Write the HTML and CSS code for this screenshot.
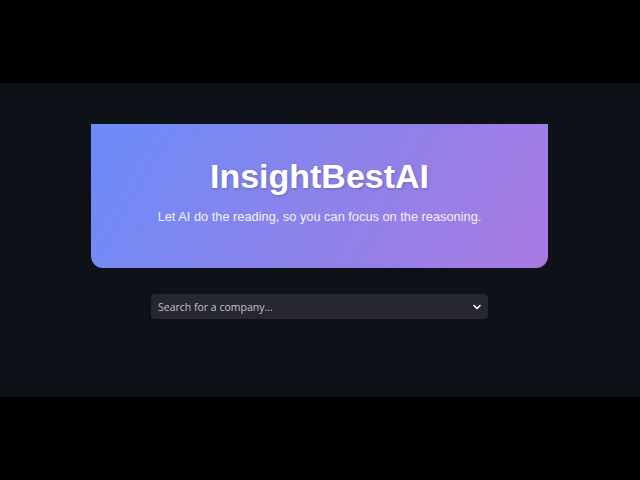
FILE: index.html
```html
<!DOCTYPE html>
<html>
<head>
<meta charset="utf-8">
<link rel="stylesheet" href="styles.css">
</head>
<body>
<div class="screen">
  <main class="app">
    <section class="hero">
      <h1 class="hero-title">InsightBestAI</h1>
      <p class="hero-sub">Let AI do the reading, so you can focus on the reasoning.</p>
    </section>
    <div class="select">
      <span class="select-placeholder">Search for a company...</span>
      <svg class="chevron" width="10" height="10" viewBox="0 0 10 10"><path d="M2 3.5 L5 6.5 L8 3.5" fill="none" stroke="#fafafa" stroke-width="1.6" stroke-linecap="round" stroke-linejoin="round"/></svg>
    </div>
  </main>
</div>
</body>
</html>
```
FILE: styles.css
```css
html, body {
  margin: 0;
  padding: 0;
  background: #000;
  width: 640px;
  height: 480px;
  overflow: hidden;
}
.screen {
  padding-top: 83px;
}
.app {
  height: 314px;
  background: #0e1117;
  display: flex;
  flex-direction: column;
  align-items: center;
  padding-top: 41px;
  box-sizing: border-box;
}
.hero {
  width: 457px;
  height: 144px;
  margin-right: 1px;
  box-sizing: border-box;
  background: linear-gradient(120deg, #6b8cf9 0%, #8b83ea 50%, #a87ae2 100%);
  border-radius: 0 0 12px 12px;
  display: flex;
  flex-direction: column;
  align-items: center;
  padding-top: 32px;
  font-family: "Liberation Sans", Arial, sans-serif;
  color: #fff;
}
.hero-title {
  margin: 0;
  font-size: 34px;
  font-weight: bold;
  line-height: 40px;
  text-shadow: 1px 1px 3px rgba(0,0,0,0.2);
}
.hero-sub {
  margin: 13px 0 0;
  font-size: 12.8px;
  line-height: 16px;
  color: #f2f2f8;
}
.select {
  margin-top: 26px;
  margin-right: 1px;
  width: 337px;
  height: 25px;
  background: #262730;
  border-radius: 4px;
  display: flex;
  align-items: center;
  justify-content: space-between;
  padding: 0 6px 0 7px;
  box-sizing: border-box;
}
.select-placeholder {
  font-family: "Open Sans", sans-serif;
  font-size: 10.5px;
  color: #c2c3c8;
}
.chevron {
  display: block;
}
```
